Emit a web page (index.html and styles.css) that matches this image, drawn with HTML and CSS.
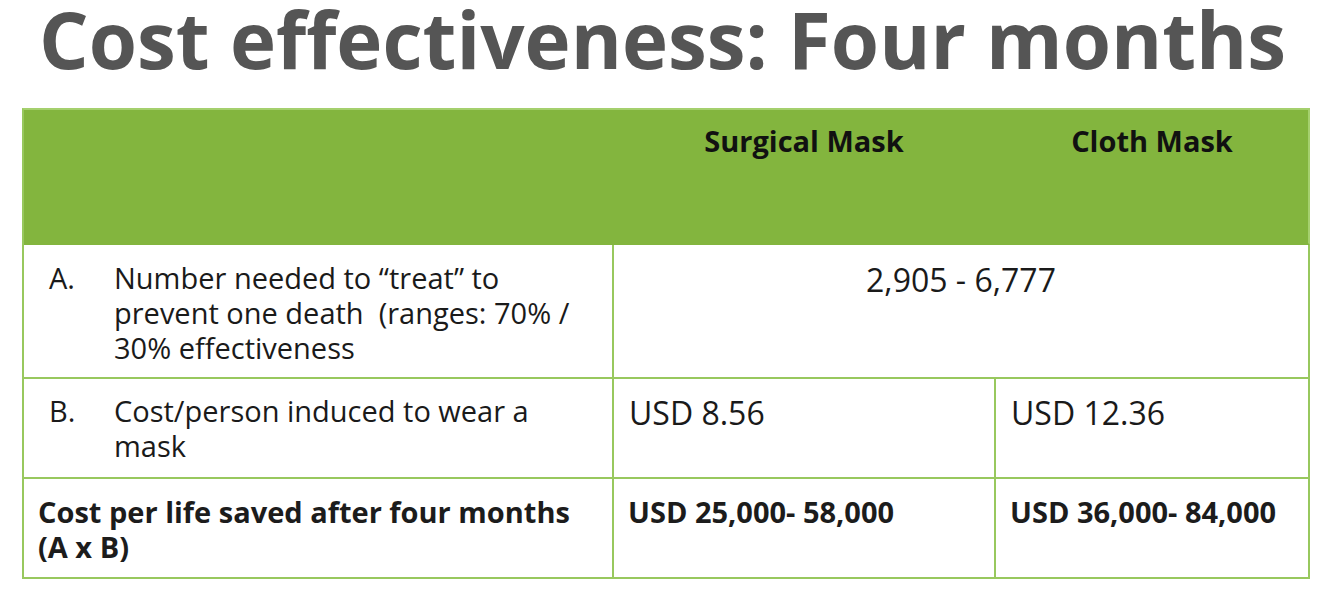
FILE: index.html
```html
<!DOCTYPE html>
<html lang="en">
<head>
<meta charset="utf-8">
<title>Cost effectiveness: Four months</title>
<link rel="stylesheet" href="styles.css">
</head>
<body>
<main class="slide">
  <h1 class="title">Cost effectiveness: Four months</h1>
  <table class="cost-table">
    <colgroup>
      <col class="col-label">
      <col class="col-surgical">
      <col class="col-cloth">
    </colgroup>
    <thead>
      <tr>
        <th></th>
        <th>Surgical Mask</th>
        <th>Cloth Mask</th>
      </tr>
    </thead>
    <tbody>
      <tr class="row-a">
        <td class="item"><div class="item-wrap"><span class="marker">A.</span><span class="item-text">Number needed to “treat” to prevent one death&nbsp; (ranges: 70% / 30% effectiveness</span></div></td>
        <td colspan="2" class="value center">2,905 - 6,777</td>
      </tr>
      <tr class="row-b">
        <td class="item"><div class="item-wrap"><span class="marker">B.</span><span class="item-text">Cost/person induced to wear a mask</span></div></td>
        <td class="value">USD 8.56</td>
        <td class="value">USD 12.36</td>
      </tr>
      <tr class="row-total">
        <td class="total-label">Cost per life saved after four months (A x B)</td>
        <td class="total-value">USD 25,000- 58,000</td>
        <td class="total-value">USD 36,000- 84,000</td>
      </tr>
    </tbody>
  </table>
</main>
</body>
</html>
```
FILE: styles.css
```css
html, body {
  margin: 0;
  padding: 0;
  background: #ffffff;
}

body {
  font-family: "Open Sans", "Liberation Sans", sans-serif;
  color: #1c1c1c;
}

.slide {
  width: 1317px;
  height: 598px;
  overflow: hidden;
}

.title {
  margin: 0;
  padding: 0 0 0 39px;
  font-size: 78px;
  line-height: 78px;
  font-weight: 700;
  color: #555555;
  white-space: nowrap;
}

.cost-table {
  margin: 30px 0 0 22px;
  width: 1286px;
  table-layout: fixed;
  border-collapse: separate;
  border-spacing: 0;
  border-top: 2px solid #a5d06e;
  border-left: 2px solid #98c85e;
}

.col-label { width: 590px; }
.col-surgical { width: 382px; }
.col-cloth { width: 314px; }

.cost-table th,
.cost-table td {
  border-right: 2px solid #98c85e;
  border-bottom: 2px solid #98c85e;
  vertical-align: top;
  text-align: left;
  box-sizing: border-box;
}

.cost-table thead th {
  background: #83b53e;
  border-right-color: #83b53e;
  border-bottom-color: #83b53e;
  height: 135px;
  padding: 13px 0 0 0;
  font-size: 29px;
  line-height: 36px;
  font-weight: 700;
  color: #111111;
  text-align: center;
}

.cost-table thead th:last-child {
  border-right-color: #a5d06e;
}

.cost-table .row-a td {
  height: 134px;
  padding-top: 15px;
}

.cost-table .row-b td {
  height: 100px;
  padding-top: 14px;
}

.cost-table .row-total td {
  height: 100px;
  padding-top: 15px;
}

.cost-table td.item {
  padding-left: 25px;
  padding-right: 20px;
  font-size: 29px;
  line-height: 35px;
  font-weight: 400;
  color: #1a1a1a;
}

.item-wrap {
  display: flex;
}

.marker {
  flex: 0 0 65px;
}

.item-text {
  flex: 1 1 auto;
}

.cost-table td.value {
  padding-left: 15px;
  padding-right: 0;
  font-size: 32px;
  line-height: 40px;
  font-weight: 400;
  color: #1a1a1a;
}

.cost-table td.value.center {
  text-align: center;
  padding-left: 0;
}

.cost-table td.total-label {
  padding-left: 14px;
  padding-right: 10px;
  font-size: 29px;
  line-height: 35px;
  font-weight: 700;
}

.cost-table td.total-value {
  padding-left: 14px;
  padding-right: 0;
  font-size: 29px;
  line-height: 35px;
  font-weight: 700;
}
```
